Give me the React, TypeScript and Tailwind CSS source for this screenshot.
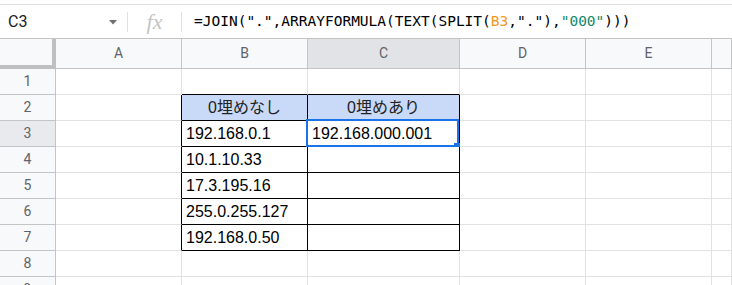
import React from "react";

const cols = ["A", "B", "C", "D", "E", ""];
const rows = [1, 2, 3, 4, 5, 6, 7, 8, 9];

const data: Record<string, string> = {
  B2: "0埋めなし",
  C2: "0埋めあり",
  B3: "192.168.0.1",
  C3: "192.168.000.001",
  B4: "10.1.10.33",
  B5: "17.3.195.16",
  B6: "255.0.255.127",
  B7: "192.168.0.50",
};

const inTable = (c: string, r: number) => (c === "B" || c === "C") && r >= 2 && r <= 7;

const cellFont = { fontFamily: '"Liberation Sans", Arial, "Noto Sans CJK JP", sans-serif' };

const App: React.FC = () => {
  return (
    <div className="w-[732px] h-[285px] overflow-hidden bg-white" style={{ fontFamily: "Roboto, Arial, sans-serif" }}>
      {/* formula bar */}
      <div className="h-[34px] border-t border-[#e1e1e1] mt-[4px] flex items-center">
        <div className="w-[127px] flex items-center pl-[8px] pr-[10px] h-full">
          <span className="text-[16px] text-[#202124] flex-1">C3</span>
          <svg width="8" height="5" viewBox="0 0 8 5" className="mt-[2px]">
            <path d="M0 0 L8 0 L4 4.5 Z" fill="#707070" />
          </svg>
        </div>
        <div className="w-px h-[20px] bg-[#e0e0e0]" />
        <div className="w-[53px] flex justify-center">
          <span
            className="text-[22px] italic text-[#c4c4c4] leading-none"
            style={{ fontFamily: '"Liberation Serif", serif' }}
          >
            fx
          </span>
        </div>
        <div className="w-px h-[20px] bg-[#e0e0e0]" />
        <div
          className="pl-[12px] text-[14.5px] text-[#000] whitespace-nowrap"
          style={{ fontFamily: '"DejaVu Sans Mono", "Liberation Mono", monospace' }}
        >
          =JOIN(".",ARRAYFORMULA(TEXT(SPLIT(<span className="text-[#f4971c]">B3</span>,"."),
          <span className="text-[#10896b]">"000"</span>)))
        </div>
      </div>

      {/* grid */}
      <div className="grid grid-cols-[56px_126px_126px_152px_126px_126px_1fr] grid-rows-[30px_repeat(9,26px)] border-t border-[#c4c4c4]">
        {/* corner */}
        <div className="bg-[#f8f9fa] border-r-[4px] border-b-[4px] border-[#c0c0c0]" />
        {cols.map((c) => (
          <div
            key={c || "F"}
            className={`flex items-center justify-center border-r border-b border-[#c4c4c4] text-[14px] text-[#5f6368] ${
              c === "C" ? "bg-[#e1e3e6]" : "bg-[#f8f9fa]"
            }`}
          >
            {c}
          </div>
        ))}
        {rows.map((r) => (
          <React.Fragment key={r}>
            <div
              className={`flex items-center justify-center border-r border-b border-[#c4c4c4] text-[14px] text-[#5f6368] ${
                r === 3 ? "bg-[#e8eaed]" : "bg-[#f8f9fa]"
              }`}
            >
              {r}
            </div>
            {cols.map((c) => {
              const key = `${c}${r}`;
              const rightBlack = inTable(c, r) || (c === "A" && r >= 2 && r <= 7);
              const bottomBlack = inTable(c, r) || ((c === "B" || c === "C") && r === 1);
              const header = inTable(c, r) && r === 2;
              return (
                <div
                  key={key}
                  className={`relative flex items-center border-r border-b px-[4px] text-[16px] text-[#000] whitespace-nowrap ${
                    rightBlack ? "border-r-black" : "border-r-[#e2e2e3]"
                  } ${bottomBlack ? "border-b-black" : "border-b-[#e2e2e3]"} ${
                    header ? "bg-[#c9daf8] justify-center text-[#222]" : "bg-white"
                  }`}
                  style={cellFont}
                >
                  {data[key]}
                  {key === "C3" && (
                    <>
                      <div className="absolute -left-[2px] -top-[2px] right-0 -bottom-[1px] border-2 border-[#1a73e8]" />
                      <div className="absolute -right-[2px] -bottom-[4px] w-[7px] h-[7px] bg-[#1a73e8]" />
                    </>
                  )}
                </div>
              );
            })}
          </React.Fragment>
        ))}
      </div>
    </div>
  );
};

export default App;
